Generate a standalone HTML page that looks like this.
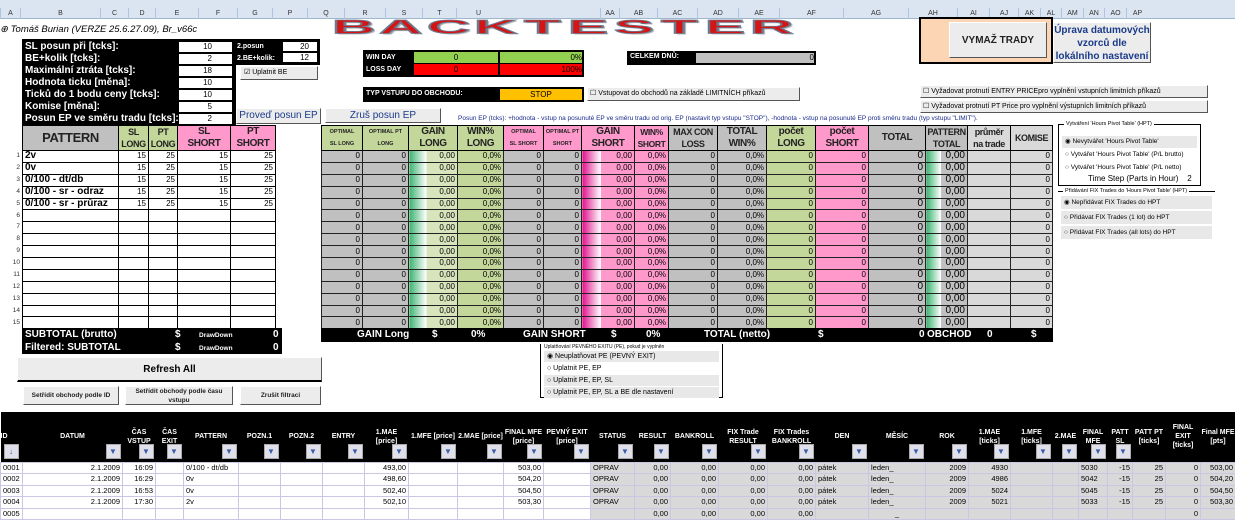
<!DOCTYPE html>
<html><head><meta charset="utf-8">
<style>
*{box-sizing:border-box;margin:0;padding:0}
body{width:1235px;height:519px;overflow:hidden;background:#fff;font-family:"Liberation Sans",Arial,sans-serif;font-size:8px;position:relative;color:#000}
.a{position:absolute}
.hdr{left:0;top:0;width:1235px;height:19px;background:#dbe5f1;border-bottom:1px solid #9eb6ce}
.cl{position:absolute;top:8px;height:11px;border-left:1px solid #b0c4de;text-align:center;font-size:7px;line-height:11px;color:#333}
table{border-collapse:collapse;table-layout:fixed;position:absolute}
td{overflow:hidden;white-space:nowrap;padding:0 2px}
.lt td{height:11.9px;border:1px solid #000;font-weight:bold;font-size:10px;line-height:10px}
.mt td{height:11.9px;border:1px solid #222;text-align:right;font-size:8px;line-height:10px}
.mt th,.lt th{border:1px solid #000;font-size:10px;line-height:12px;font-weight:bold;color:#222;overflow:hidden;white-space:nowrap;letter-spacing:-0.4px}
.g{background:linear-gradient(90deg,#3cb371,#fff 35%,#d8e4bc 36%)!important}
.p{background:linear-gradient(90deg,#e0148c,#fff 35%,#ff99cc 36%)!important}
.pt{background:linear-gradient(90deg,#3cb371,#fff 35%,#c0c0c0 36%)!important;font-size:10px!important}
.btn{position:absolute;background:#ececec;border:1px solid #fff;border-right:1px solid #555;border-bottom:1px solid #555;text-align:center;font-weight:bold}
.bk{position:absolute;background:#000;color:#fff;font-weight:bold}
.wb{position:absolute;background:#fff;border:1px solid #000;text-align:right;padding-right:20px;font-size:8px;color:#000;font-weight:normal}
.bt td{height:11.5px;border:1px solid #c8c8e4;font-size:7.5px;line-height:10px;text-align:right}
.bt td.l{text-align:left}
.bt th{background:#000;color:#fff;font-size:7px;font-weight:bold;vertical-align:middle;position:relative;border:0;line-height:9px}
.dd{position:absolute;right:2px;bottom:3px;width:15px;height:15px;background:#e0e0ea;border:1px solid #aaa;color:#3a5fa8;font-size:8px;line-height:14px;text-align:center}
.rb{font-size:6.5px;background:#e8e8e8;margin:1px 3px;height:12px;line-height:12px;padding-left:3px;white-space:nowrap;overflow:hidden}
.lg span{display:inline-block;transform:scale(2.5,.8)}
</style></head><body>
<div class="a hdr"></div>
<div class="cl" style="left:0;width:20px">A</div><div class="cl" style="left:20px;width:80px">B</div><div class="cl" style="left:100px;width:28px">C</div><div class="cl" style="left:128px;width:27px">D</div><div class="cl" style="left:155px;width:43px">E</div><div class="cl" style="left:198px;width:39px">F</div><div class="cl" style="left:237px;width:35px">G</div><div class="cl" style="left:272px;width:35px">P</div><div class="cl" style="left:307px;width:37px">Q</div><div class="cl" style="left:344px;width:41px">R</div><div class="cl" style="left:385px;width:37px">S</div><div class="cl" style="left:422px;width:34px">T</div><div class="cl" style="left:456px;width:44px">U</div><div class="cl" style="left:600px;width:19px">AA</div><div class="cl" style="left:619px;width:38px">AB</div><div class="cl" style="left:657px;width:40px">AC</div><div class="cl" style="left:697px;width:41px">AD</div><div class="cl" style="left:738px;width:41px">AE</div><div class="cl" style="left:779px;width:64px">AF</div><div class="cl" style="left:843px;width:65px">AG</div><div class="cl" style="left:908px;width:49px">AH</div><div class="cl" style="left:957px;width:32px">AI</div><div class="cl" style="left:989px;width:29px">AJ</div><div class="cl" style="left:1018px;width:22px">AK</div><div class="cl" style="left:1040px;width:21px">AL</div><div class="cl" style="left:1061px;width:22px">AM</div><div class="cl" style="left:1083px;width:21px">AN</div><div class="cl" style="left:1104px;width:22px">AO</div><div class="cl" style="left:1126px;width:22px">AP</div>

<div class="a" style="left:0;top:24px;font-size:9.5px;font-style:italic">⊕ Tomáš Burian (VERZE 25.6.27.09), Br_v66c</div>

<div class="a lg" style="left:335px;top:16px;width:455px;height:24px;display:flex;justify-content:space-between;font:bold 24px/24px 'Liberation Sans',sans-serif;color:#d41515;-webkit-text-stroke:1px #6a7a90;text-shadow:1px 1px 0 #bbb;padding:0 10px">
<span>B</span><span>A</span><span>C</span><span>K</span><span>T</span><span>E</span><span>S</span><span>T</span><span>E</span><span>R</span></div>

<!-- settings block -->
<div class="bk" style="left:22px;top:39px;width:214px;height:86px;font-size:10px;line-height:12px;padding:2px 0 0 3px">SL posun při [tcks]:<br>BE+kolik [tcks]:<br>Maximální ztráta [tcks]:<br>Hodnota ticku [měna]:<br>Ticků do 1 bodu ceny [tcks]:<br>Komise [měna]:<br>Posun EP ve směru tradu [tcks]:</div>
<div class="wb" style="left:178px;top:41px;width:55px;height:12px">10</div>
<div class="wb" style="left:178px;top:53px;width:55px;height:12px">2</div>
<div class="wb" style="left:178px;top:65px;width:55px;height:12px">18</div>
<div class="wb" style="left:178px;top:77px;width:55px;height:12px">10</div>
<div class="wb" style="left:178px;top:89px;width:55px;height:12px">10</div>
<div class="wb" style="left:178px;top:101px;width:55px;height:12px">5</div>
<div class="wb" style="left:178px;top:113px;width:55px;height:12px">2</div>
<div class="bk" style="left:234px;top:39px;width:86px;height:26px;font-size:7px;line-height:12px;padding:2px 0 0 3px">2.posun<br>2.BE+kolik:</div>
<div class="wb" style="left:282px;top:41px;width:36px;height:11px;padding-right:8px">20</div>
<div class="wb" style="left:282px;top:52px;width:36px;height:11px;padding-right:8px">12</div>
<div class="btn" style="left:240px;top:66px;width:78px;height:14px;font-size:7px;line-height:12px;text-align:left;padding-left:3px;font-weight:normal">☑ Uplatnit BE</div>
<div class="btn" style="left:236px;top:108px;width:85px;height:16px;font-size:10px;line-height:14px;color:#1a3a8a;font-weight:normal">Proveď posun EP</div>
<div class="btn" style="left:325px;top:108px;width:116px;height:15px;font-size:10px;line-height:13px;color:#1a3a8a;font-weight:normal">Zruš posun EP</div>
<div class="a" style="left:458px;top:115px;font-size:6.5px;color:#1a2a8a">Posun EP (tcks): +hodnota - vstup na posunuté EP ve směru tradu od orig. EP (nastavit typ vstupu "STOP"), -hodnota - vstup na posunuté EP proti směru tradu (typ vstupu "LIMIT").</div>

<!-- win day -->
<div class="bk" style="left:363px;top:50px;width:221px;height:27px;font-size:7px;line-height:12px;padding:2px 3px">WIN DAY<br>LOSS DAY</div>
<div class="a" style="left:414px;top:52px;width:84px;height:11px;background:#92d050;text-align:center;line-height:11px">0</div>
<div class="a" style="left:500px;top:52px;width:82px;height:11px;background:#92d050;text-align:right;line-height:11px">0%</div>
<div class="a" style="left:414px;top:64px;width:84px;height:11px;background:#f00;text-align:center;line-height:11px">0</div>
<div class="a" style="left:500px;top:64px;width:82px;height:11px;background:#f00;text-align:right;line-height:11px">100%</div>
<div class="bk" style="left:363px;top:87px;width:221px;height:15px;font-size:7px;line-height:13px;padding-left:3px">TYP VSTUPU DO OBCHODU:</div>
<div class="a" style="left:500px;top:89px;width:82px;height:11px;background:#ffc000;text-align:center;line-height:11px">STOP</div>
<div class="btn" style="left:587px;top:87px;width:213px;height:14px;font-size:7px;line-height:12px;text-align:left;padding-left:2px;font-weight:normal">☐ Vstupovat do obchodů na základě LIMITNÍCH příkazů</div>
<div class="bk" style="left:627px;top:51px;width:189px;height:14px;font-size:7px;line-height:12px;padding-left:3px">CELKEM DNŮ:</div>
<div class="a" style="left:696px;top:53px;width:118px;height:10px;background:#c0c0c0;text-align:right;line-height:10px">0</div>

<div class="a" style="left:919px;top:17px;width:134px;height:47px;background:#fcd5b4;border:2px solid #000"></div>
<div class="btn" style="left:949px;top:22px;width:98px;height:36px;font-size:10px;line-height:36px;color:#222">VYMAŽ TRADY</div>
<div class="btn" style="left:1053px;top:22px;width:98px;height:41px;font-size:10px;line-height:13px;color:#1a3a8a;font-weight:bold;padding-top:1px">Úprava datumových vzorců dle lokálního nastavení</div>
<div class="btn" style="left:920px;top:85px;width:288px;height:13px;font-size:7px;line-height:11px;text-align:left;padding-left:2px;font-weight:normal">☐ Vyžadovat protnutí ENTRY PRICEpro vyplnění vstupních limitních příkazů</div>
<div class="btn" style="left:920px;top:100px;width:288px;height:13px;font-size:7px;line-height:11px;text-align:left;padding-left:2px;font-weight:normal">☐ Vyžadovat protnutí PT Price pro vyplnění výstupních limitních příkazů</div>

<div class="a" style="left:1058px;top:124px;width:143px;height:62px;border:1px solid #000"><div style="font-size:5.5px;position:absolute;top:-4px;left:5px;background:#fff;padding:0 2px;white-space:nowrap">Vytváření 'Hours Pivot Table' (HPT)</div>
<div class="rb" style="margin-top:11px">◉ Nevytvářet 'Hours Pivot Table'</div><div class="rb" style="background:#fff">○ Vytvářet 'Hours Pivot Table' (P/L brutto)</div><div class="rb" style="background:#fff">○ Vytvářet 'Hours Pivot Table' (P/L netto)</div></div>
<div class="a" style="left:1088px;top:174px;font-size:8px;white-space:nowrap">Time Step (Parts in Hour) &nbsp;&nbsp; 2</div>
<div class="a" style="left:1058px;top:191px;width:157px;height:45px;border-top:1px solid #000"><div style="font-size:5.5px;position:absolute;top:-4px;left:5px;background:#fff;padding:0 2px;white-space:nowrap">Přidávání FIX Trades do 'Hours Pivot Table' (HPT)</div>
<div class="rb" style="margin-top:4px;height:13px;line-height:13px;margin-bottom:2px">◉ Nepřidávat FIX Trades do HPT</div><div class="rb" style="height:13px;line-height:13px;margin-bottom:2px">○ Přidávat FIX Trades (1 lot) do HPT</div><div class="rb" style="height:13px;line-height:13px">○ Přidávat FIX Trades (all lots) do HPT</div></div>

<!-- row numbers -->
<div class="a" style="left:0;top:150px;width:20px;font-size:6.5px;line-height:11.9px;text-align:right;color:#333">1<br>2<br>3<br>4<br>5<br>6<br>7<br>8<br>9<br>10<br>11<br>12<br>13<br>14<br>15</div>

<!-- left table -->
<table class="lt" style="left:22px;top:125px;width:253px">
<col style="width:96px"><col style="width:30px"><col style="width:29px"><col style="width:53px"><col style="width:45px">
<tr style="height:25px"><th style="background:#c0c0c0;font-size:13px">PATTERN</th><th style="background:#c4d79b;font-size:9px">SL<br>LONG</th><th style="background:#c4d79b;font-size:9px">PT<br>LONG</th><th style="background:#ff99cc">SL<br>SHORT</th><th style="background:#ff99cc">PT<br>SHORT</th></tr>
<tr><td>2v</td><td align=right style="font-weight:normal;font-size:8px">15</td><td align=right style="font-weight:normal;font-size:8px">25</td><td align=right style="font-weight:normal;font-size:8px">15</td><td align=right style="font-weight:normal;font-size:8px">25</td></tr>
<tr><td>0v</td><td align=right style="font-weight:normal;font-size:8px">15</td><td align=right style="font-weight:normal;font-size:8px">25</td><td align=right style="font-weight:normal;font-size:8px">15</td><td align=right style="font-weight:normal;font-size:8px">25</td></tr>
<tr><td>0/100 - dt/db</td><td align=right style="font-weight:normal;font-size:8px">15</td><td align=right style="font-weight:normal;font-size:8px">25</td><td align=right style="font-weight:normal;font-size:8px">15</td><td align=right style="font-weight:normal;font-size:8px">25</td></tr>
<tr><td>0/100 - sr - odraz</td><td align=right style="font-weight:normal;font-size:8px">15</td><td align=right style="font-weight:normal;font-size:8px">25</td><td align=right style="font-weight:normal;font-size:8px">15</td><td align=right style="font-weight:normal;font-size:8px">25</td></tr>
<tr><td>0/100 - sr - průraz</td><td align=right style="font-weight:normal;font-size:8px">15</td><td align=right style="font-weight:normal;font-size:8px">25</td><td align=right style="font-weight:normal;font-size:8px">15</td><td align=right style="font-weight:normal;font-size:8px">25</td></tr>
<tr><td></td><td></td><td></td><td></td><td></td></tr><tr><td></td><td></td><td></td><td></td><td></td></tr><tr><td></td><td></td><td></td><td></td><td></td></tr><tr><td></td><td></td><td></td><td></td><td></td></tr><tr><td></td><td></td><td></td><td></td><td></td></tr><tr><td></td><td></td><td></td><td></td><td></td></tr><tr><td></td><td></td><td></td><td></td><td></td></tr><tr><td></td><td></td><td></td><td></td><td></td></tr><tr><td></td><td></td><td></td><td></td><td></td></tr><tr><td></td><td></td><td></td><td></td><td></td></tr>
</table>
<div class="bk" style="left:22px;top:328px;width:260px;height:26px;font-size:10px;line-height:13px;padding-left:3px">SUBTOTAL (brutto)<br>Filtered: SUBTOTAL</div>
<div class="a" style="left:175px;top:328px;color:#fff;font-weight:bold;font-size:10px;line-height:13px">$<br>$</div>
<div class="a" style="left:199px;top:329px;color:#fff;font-weight:bold;font-size:6.5px;line-height:13px">DrawDown<br>DrawDown</div>
<div class="a" style="left:273px;top:328px;color:#fff;font-weight:bold;font-size:10px;line-height:13px">0<br>0</div>

<!-- main table -->
<table class="mt" style="left:321px;top:125px;width:731px">
<col style="width:41px;background:#c0c0c0"><col style="width:46px;background:#c0c0c0"><col style="width:49px"><col style="width:46px;background:#c4d79b"><col style="width:40px;background:#c0c0c0"><col style="width:38px;background:#c0c0c0"><col style="width:53px"><col style="width:34px;background:#ff99cc"><col style="width:49px;background:#c0c0c0"><col style="width:49px;background:#c0c0c0"><col style="width:49px;background:#c4d79b"><col style="width:53px;background:#ff99cc"><col style="width:57px;background:#c0c0c0"><col style="width:42px"><col style="width:43px;background:#d9d9d9"><col style="width:42px;background:#d9d9d9">
<tr style="height:25px"><th style="background:#c4d79b;font-size:5.5px;letter-spacing:0">OPTIMAL<br>SL LONG</th><th style="background:#c4d79b;font-size:5.5px;letter-spacing:0">OPTIMAL PT<br>LONG</th><th style="background:#c4d79b">GAIN<br>LONG</th><th style="background:#c4d79b">WIN%<br>LONG</th><th style="background:#ff99cc;font-size:5.5px;letter-spacing:0">OPTIMAL<br>SL SHORT</th><th style="background:#ff99cc;font-size:5.5px;letter-spacing:0">OPTIMAL PT<br>SHORT</th><th style="background:#ff99cc">GAIN<br>SHORT</th><th style="background:#ff99cc;font-size:8.5px">WIN%<br>SHORT</th><th style="background:#c0c0c0;font-size:9px">MAX CON<br>LOSS</th><th style="background:#c0c0c0">TOTAL<br>WIN%</th><th style="background:#c4d79b">počet<br>LONG</th><th style="background:#ff99cc">počet<br>SHORT</th><th style="background:#c0c0c0">TOTAL</th><th style="background:#c0c0c0;font-size:9px">PATTERN<br>TOTAL</th><th style="background:#d9d9d9;font-size:9px">průměr<br>na trade</th><th style="background:#d9d9d9;font-size:9px">KOMISE</th></tr>
<tr><td>0</td><td>0</td><td class=g>0,00</td><td>0,0%</td><td>0</td><td>0</td><td class=p>0,00</td><td>0,0%</td><td>0</td><td>0,0%</td><td>0</td><td>0</td><td style="font-size:10px">0</td><td class=pt>0,00</td><td></td><td>0</td></tr>
<tr><td>0</td><td>0</td><td class=g>0,00</td><td>0,0%</td><td>0</td><td>0</td><td class=p>0,00</td><td>0,0%</td><td>0</td><td>0,0%</td><td>0</td><td>0</td><td style="font-size:10px">0</td><td class=pt>0,00</td><td></td><td>0</td></tr>
<tr><td>0</td><td>0</td><td class=g>0,00</td><td>0,0%</td><td>0</td><td>0</td><td class=p>0,00</td><td>0,0%</td><td>0</td><td>0,0%</td><td>0</td><td>0</td><td style="font-size:10px">0</td><td class=pt>0,00</td><td></td><td>0</td></tr>
<tr><td>0</td><td>0</td><td class=g>0,00</td><td>0,0%</td><td>0</td><td>0</td><td class=p>0,00</td><td>0,0%</td><td>0</td><td>0,0%</td><td>0</td><td>0</td><td style="font-size:10px">0</td><td class=pt>0,00</td><td></td><td>0</td></tr>
<tr><td>0</td><td>0</td><td class=g>0,00</td><td>0,0%</td><td>0</td><td>0</td><td class=p>0,00</td><td>0,0%</td><td>0</td><td>0,0%</td><td>0</td><td>0</td><td style="font-size:10px">0</td><td class=pt>0,00</td><td></td><td>0</td></tr>
<tr><td>0</td><td>0</td><td class=g>0,00</td><td>0,0%</td><td>0</td><td>0</td><td class=p>0,00</td><td>0,0%</td><td>0</td><td>0,0%</td><td>0</td><td>0</td><td style="font-size:10px">0</td><td class=pt>0,00</td><td></td><td>0</td></tr>
<tr><td>0</td><td>0</td><td class=g>0,00</td><td>0,0%</td><td>0</td><td>0</td><td class=p>0,00</td><td>0,0%</td><td>0</td><td>0,0%</td><td>0</td><td>0</td><td style="font-size:10px">0</td><td class=pt>0,00</td><td></td><td>0</td></tr>
<tr><td>0</td><td>0</td><td class=g>0,00</td><td>0,0%</td><td>0</td><td>0</td><td class=p>0,00</td><td>0,0%</td><td>0</td><td>0,0%</td><td>0</td><td>0</td><td style="font-size:10px">0</td><td class=pt>0,00</td><td></td><td>0</td></tr>
<tr><td>0</td><td>0</td><td class=g>0,00</td><td>0,0%</td><td>0</td><td>0</td><td class=p>0,00</td><td>0,0%</td><td>0</td><td>0,0%</td><td>0</td><td>0</td><td style="font-size:10px">0</td><td class=pt>0,00</td><td></td><td>0</td></tr>
<tr><td>0</td><td>0</td><td class=g>0,00</td><td>0,0%</td><td>0</td><td>0</td><td class=p>0,00</td><td>0,0%</td><td>0</td><td>0,0%</td><td>0</td><td>0</td><td style="font-size:10px">0</td><td class=pt>0,00</td><td></td><td>0</td></tr>
<tr><td>0</td><td>0</td><td class=g>0,00</td><td>0,0%</td><td>0</td><td>0</td><td class=p>0,00</td><td>0,0%</td><td>0</td><td>0,0%</td><td>0</td><td>0</td><td style="font-size:10px">0</td><td class=pt>0,00</td><td></td><td>0</td></tr>
<tr><td>0</td><td>0</td><td class=g>0,00</td><td>0,0%</td><td>0</td><td>0</td><td class=p>0,00</td><td>0,0%</td><td>0</td><td>0,0%</td><td>0</td><td>0</td><td style="font-size:10px">0</td><td class=pt>0,00</td><td></td><td>0</td></tr>
<tr><td>0</td><td>0</td><td class=g>0,00</td><td>0,0%</td><td>0</td><td>0</td><td class=p>0,00</td><td>0,0%</td><td>0</td><td>0,0%</td><td>0</td><td>0</td><td style="font-size:10px">0</td><td class=pt>0,00</td><td></td><td>0</td></tr>
<tr><td>0</td><td>0</td><td class=g>0,00</td><td>0,0%</td><td>0</td><td>0</td><td class=p>0,00</td><td>0,0%</td><td>0</td><td>0,0%</td><td>0</td><td>0</td><td style="font-size:10px">0</td><td class=pt>0,00</td><td></td><td>0</td></tr>
<tr><td>0</td><td>0</td><td class=g>0,00</td><td>0,0%</td><td>0</td><td>0</td><td class=p>0,00</td><td>0,0%</td><td>0</td><td>0,0%</td><td>0</td><td>0</td><td style="font-size:10px">0</td><td class=pt>0,00</td><td></td><td>0</td></tr>
</table>
<div class="bk" style="left:321px;top:328px;width:732px;height:14px;font-size:10px;line-height:14px">
<span class="a" style="left:36px">GAIN Long</span><span class="a" style="left:111px">$</span><span class="a" style="left:150px">0%</span><span class="a" style="left:202px">GAIN SHORT</span><span class="a" style="left:290px">$</span><span class="a" style="left:325px">0%</span><span class="a" style="left:383px">TOTAL (netto)</span><span class="a" style="left:497px">$</span><span class="a" style="left:598px">0</span><span class="a" style="left:606px">OBCHOD</span><span class="a" style="left:666px">0</span><span class="a" style="left:710px">$</span></div>

<div class="a" style="left:540px;top:344px;width:183px;height:54px;border:1px solid #000;border-top:0"><div style="font-size:5px;margin:0 0 0 3px;white-space:nowrap">Uplatňování PEVNÉHO EXITU (PE), pokud je vyplněn</div>
<div class="rb" style="margin:1px 3px;height:11px;line-height:11px;font-size:7px">◉ Neuplatňovat PE (PEVNÝ EXIT)</div><div class="rb" style="margin:1px 3px;height:11px;line-height:11px;font-size:7px;background:#fff">○ Uplatnit PE, EP</div><div class="rb" style="margin:1px 3px;height:11px;line-height:11px;font-size:7px">○ Uplatnit PE, EP, SL</div><div class="rb" style="margin:1px 3px;height:11px;line-height:11px;font-size:7px">○ Uplatnit PE, EP, SL a BE dle nastavení</div></div>

<div class="btn" style="left:17px;top:357px;width:305px;height:25px;font-size:10px;line-height:23px;border-bottom:2px solid #000">Refresh All</div>
<div class="btn" style="left:23px;top:386px;width:96px;height:19px;font-size:6.5px;line-height:17px;color:#222">Setřídit obchody podle ID</div>
<div class="btn" style="left:125px;top:386px;width:108px;height:19px;font-size:6.5px;line-height:9px;color:#222">Setřídit obchody podle času vstupu</div>
<div class="btn" style="left:240px;top:386px;width:81px;height:19px;font-size:6.5px;line-height:17px;color:#222">Zrušit filtraci</div>

<!-- bottom table -->
<table class="bt" style="left:0;top:412px;width:1235px">
<col style="width:22px"><col style="width:100px"><col style="width:33px"><col style="width:28px"><col style="width:55px"><col style="width:42px"><col style="width:42px"><col style="width:42px"><col style="width:44px"><col style="width:49px"><col style="width:46px"><col style="width:40px"><col style="width:47px"><col style="width:44px;background:#d9d9d9"><col style="width:36px;background:#d9d9d9"><col style="width:48px;background:#d9d9d9"><col style="width:49px;background:#d9d9d9"><col style="width:48px;background:#d9d9d9"><col style="width:53px;background:#d9d9d9"><col style="width:57px;background:#d9d9d9"><col style="width:43px;background:#d9d9d9"><col style="width:42px;background:#d9d9d9"><col style="width:42px;background:#d9d9d9"><col style="width:26px;background:#d9d9d9"><col style="width:29px;background:#d9d9d9"><col style="width:25px;background:#d9d9d9"><col style="width:33px;background:#d9d9d9"><col style="width:35px;background:#d9d9d9"><col style="width:35px;background:#d9d9d9">
<tr style="height:50px"><th style="text-align:left">ID<span class="dd" style="left:3px;right:auto">↓</span></th><th>DATUM<span class="dd">▼</span></th><th>ČAS VSTUP<span class="dd">▼</span></th><th>ČAS EXIT<span class="dd">▼</span></th><th>PATTERN<span class="dd">▼</span></th><th>POZN.1<span class="dd">▼</span></th><th>POZN.2<span class="dd">▼</span></th><th>ENTRY<span class="dd">▼</span></th><th>1.MAE [price]<span class="dd">▼</span></th><th>1.MFE [price]<span class="dd">▼</span></th><th>2.MAE [price]<span class="dd">▼</span></th><th>FINAL MFE [price]<span class="dd">▼</span></th><th>PEVNÝ EXIT [price]<span class="dd">▼</span></th><th>STATUS<span class="dd">▼</span></th><th>RESULT<span class="dd">▼</span></th><th>BANKROLL<span class="dd">▼</span></th><th>FIX Trade RESULT<span class="dd">▼</span></th><th>FIX Trades BANKROLL<span class="dd">▼</span></th><th>DEN<span class="dd">▼</span></th><th>MĚSÍC<span class="dd">▼</span></th><th>ROK<span class="dd">▼</span></th><th>1.MAE [ticks]<span class="dd">▼</span></th><th>1.MFE [ticks]<span class="dd">▼</span></th><th>2.MAE<span class="dd">▼</span></th><th>FINAL MFE<span class="dd">▼</span></th><th>PATT SL<span class="dd">▼</span></th><th>PATT PT [ticks]</th><th>FINAL EXIT [ticks]</th><th>Final MFE [pts]</th></tr>
<tr><td class=l>0001</td><td>2.1.2009</td><td>16:09</td><td></td><td class=l>0/100 - dt/db</td><td></td><td></td><td></td><td>493,00</td><td></td><td></td><td>503,00</td><td></td><td class=l>OPRAV</td><td>0,00</td><td>0,00</td><td>0,00</td><td>0,00</td><td class=l>pátek</td><td class=l>leden_</td><td>2009</td><td>4930</td><td></td><td></td><td class=l>5030</td><td>-15</td><td>25</td><td>0</td><td>503,00</td></tr>
<tr><td class=l>0002</td><td>2.1.2009</td><td>16:29</td><td></td><td class=l>0v</td><td></td><td></td><td></td><td>498,60</td><td></td><td></td><td>504,20</td><td></td><td class=l>OPRAV</td><td>0,00</td><td>0,00</td><td>0,00</td><td>0,00</td><td class=l>pátek</td><td class=l>leden_</td><td>2009</td><td>4986</td><td></td><td></td><td class=l>5042</td><td>-15</td><td>25</td><td>0</td><td>504,20</td></tr>
<tr><td class=l>0003</td><td>2.1.2009</td><td>16:53</td><td></td><td class=l>0v</td><td></td><td></td><td></td><td>502,40</td><td></td><td></td><td>504,50</td><td></td><td class=l>OPRAV</td><td>0,00</td><td>0,00</td><td>0,00</td><td>0,00</td><td class=l>pátek</td><td class=l>leden_</td><td>2009</td><td>5024</td><td></td><td></td><td class=l>5045</td><td>-15</td><td>25</td><td>0</td><td>504,50</td></tr>
<tr><td class=l>0004</td><td>2.1.2009</td><td>17:30</td><td></td><td class=l>2v</td><td></td><td></td><td></td><td>502,10</td><td></td><td></td><td>503,30</td><td></td><td class=l>OPRAV</td><td>0,00</td><td>0,00</td><td>0,00</td><td>0,00</td><td class=l>pátek</td><td class=l>leden_</td><td>2009</td><td>5021</td><td></td><td></td><td class=l>5033</td><td>-15</td><td>25</td><td>0</td><td>503,30</td></tr>
<tr><td class=l>0005</td><td></td><td></td><td></td><td></td><td></td><td></td><td></td><td></td><td></td><td></td><td></td><td></td><td></td><td>0,00</td><td>0,00</td><td>0,00</td><td>0,00</td><td></td><td style="text-align:center">_</td><td></td><td></td><td></td><td></td><td></td><td></td><td></td><td>0</td><td></td></tr>
</table>
</body></html>
